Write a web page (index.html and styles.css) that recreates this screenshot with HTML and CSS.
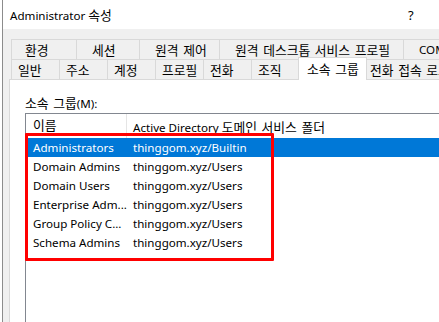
FILE: index.html
```html
<!DOCTYPE html>
<html lang="ko">
<head>
    <meta charset="UTF-8">
    <title>Administrator 속성</title>
    <link rel="stylesheet" href="styles.css">
</head>
<body>
    <div class="window">
        <div class="title-bar">
            <span class="title">Administrator <span class="ko">속성</span></span>
            <span class="help">?</span>
        </div>
        <div class="dialog">
            <div class="tab-row">
                <div class="tab ko" style="width: 65px;">환경</div>
                <div class="tab ko" style="width: 63px;">세션</div>
                <div class="tab ko" style="width: 80px;">원격 제어</div>
                <div class="tab ko" style="width: 184px;">원격 데스크톱 서비스 프로필</div>
                <div class="tab wide">COM+</div>
            </div>
            <div class="tab-row lower">
                <div class="tab ko small">일반</div>
                <div class="tab ko small">주소</div>
                <div class="tab ko small">계정</div>
                <div class="tab ko small">프로필</div>
                <div class="tab ko small">전화</div>
                <div class="tab ko small">조직</div>
                <div class="tab ko active">소속 그룹</div>
                <div class="tab ko wide after">전화 접속 로그인</div>
            </div>
            <div class="panel">
                <div class="label"><span class="ko">소속 그룹</span>(M):</div>
                <div class="listview">
                    <div class="list-header">
                        <div class="col name"><span class="ko">이름</span></div>
                        <div class="col path">Active Directory <span class="ko">도메인 서비스 폴더</span></div>
                    </div>
                    <div class="list-row selected">
                        <div class="col name">Administrators</div>
                        <div class="col path">thinggom.xyz/Builtin</div>
                    </div>
                    <div class="list-row">
                        <div class="col name">Domain Admins</div>
                        <div class="col path">thinggom.xyz/Users</div>
                    </div>
                    <div class="list-row">
                        <div class="col name">Domain Users</div>
                        <div class="col path">thinggom.xyz/Users</div>
                    </div>
                    <div class="list-row">
                        <div class="col name">Enterprise Adm...</div>
                        <div class="col path">thinggom.xyz/Users</div>
                    </div>
                    <div class="list-row">
                        <div class="col name">Group Policy C...</div>
                        <div class="col path">thinggom.xyz/Users</div>
                    </div>
                    <div class="list-row">
                        <div class="col name">Schema Admins</div>
                        <div class="col path">thinggom.xyz/Users</div>
                    </div>
                </div>
            </div>
        </div>
    </div>
    <div class="highlight"></div>
</body>
</html>
```

FILE: styles.css
```css
body {
    margin: 0;
    padding: 0;
    width: 439px;
    height: 322px;
    overflow: hidden;
    background-color: #fff;
    font-family: "Noto Sans", "Noto Sans CJK KR", sans-serif;
    font-size: 11.6px;
    color: #000;
    position: relative;
}

.ko {
    font-family: "Noto Sans CJK KR", sans-serif;
    font-size: 12.8px;
    word-spacing: 1px;
}

.window {
    margin-left: 2px;
    width: 520px;
    height: 322px;
    border-left: 1px solid #8c8c8c;
    display: flex;
    flex-direction: column;
}

.title-bar {
    height: 29px;
    background-color: #fff;
    display: flex;
    align-items: center;
    padding-left: 7px;
}

.title {
    width: 398px;
}

.help {
    font-size: 13px;
}

.dialog {
    flex: 1;
    background-color: #f0f0f0;
    padding: 10px 0 0 6px;
    overflow: hidden;
}

.tab-row {
    display: flex;
    height: 20px;
    margin-left: 2px;
}

.tab {
    box-sizing: border-box;
    height: 20px;
    border: 1px solid #d9d9d9;
    border-bottom: none;
    border-right: none;
    padding-left: 15px;
    line-height: 19px;
    white-space: nowrap;
    background-color: #f0f0f0;
}

.tab-row .tab:first-child {
    padding-left: 13px;
}

.tab.small {
    width: 48px;
    padding-left: 6px;
}

.tab-row.lower .tab:first-child {
    padding-left: 6px;
}

.tab.wide {
    width: 120px;
}

.tab.active {
    position: relative;
    z-index: 1;
    width: 69px;
    height: 23px;
    margin-top: -2px;
    margin-left: -1px;
    margin-right: -2px;
    padding-left: 8px;
    line-height: 21px;
    background-color: #fff;
    border-right: 1px solid #d9d9d9;
}

.tab.after {
    padding-left: 4px;
}

.panel {
    background-color: #fff;
    border: 1px solid #d9d9d9;
    height: 300px;
    padding-left: 15px;
}

.label {
    padding-top: 13px;
    height: 20px;
}

.listview {
    border-top: 1px solid #828790;
    border-left: 1px solid #828790;
    height: 260px;
}

.list-header {
    display: flex;
    height: 24px;
    align-items: center;
}

.list-header .name {
    border-right: 1px solid #e5e5e5;
    height: 24px;
    line-height: 22px;
}

.list-row {
    display: flex;
    height: 19px;
    line-height: 19px;
}

.list-row.selected {
    background-color: #0078d7;
    color: #fff;
}

.col {
    white-space: nowrap;
}

.col.name {
    box-sizing: border-box;
    width: 101px;
    padding-left: 7px;
}

.col.path {
    padding-left: 6px;
}

.highlight {
    position: absolute;
    left: 25px;
    top: 133px;
    width: 243px;
    height: 122px;
    border: 3px solid #ff0000;
    border-radius: 1px;
}
```
